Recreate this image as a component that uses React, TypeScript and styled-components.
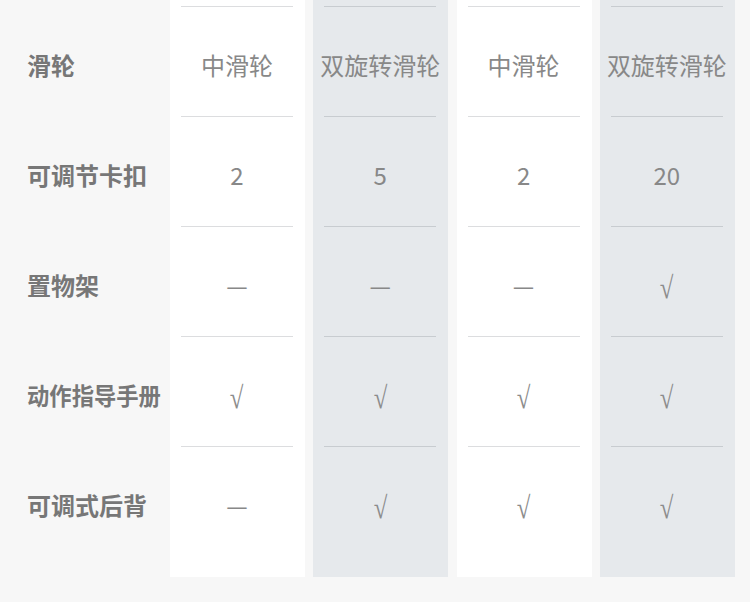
import React from "react";
import styled, { createGlobalStyle } from "styled-components";

const Global = createGlobalStyle`
  html, body { margin: 0; padding: 0; background: #f7f7f7; }
  body { font-family: "Noto Sans CJK SC", "Noto Sans", sans-serif; }
`;

const Page = styled.div`
  width: 750px;
  height: 602px;
  background: #f7f7f7;
  display: grid;
  grid-template-columns: 161.7px repeat(4, 135px);
  column-gap: 8.3px;
  align-items: start;
  overflow: hidden;
`;

const Column = styled.div<{ $tone: "label" | "white" | "gray" }>`
  display: flex;
  flex-direction: column;
  padding: 6px 0 21px;
  background: ${(p) => (p.$tone === "white" ? "#ffffff" : p.$tone === "gray" ? "#e6e9ec" : "transparent")};
`;

const Cell = styled.div<{ $tone: "label" | "white" | "gray" }>`
  box-sizing: border-box;
  height: 110px;
  padding-top: 6px;
  margin: ${(p) => (p.$tone === "label" ? "0" : "0 12px 0 11px")};
  border-top: 1px solid
    ${(p) => (p.$tone === "white" ? "#dcdddf" : p.$tone === "gray" ? "#c8ccd0" : "transparent")};
  display: flex;
  align-items: center;
  justify-content: ${(p) => (p.$tone === "label" ? "flex-start" : "center")};
  padding-left: ${(p) => (p.$tone === "label" ? "27px" : "0")};
`;

const Label = styled.span<{ $condensed?: boolean }>`
  font-size: 24px;
  font-weight: 700;
  color: #777777;
  line-height: 1;
  white-space: nowrap;
  display: inline-block;
  transform: ${(p) => (p.$condensed ? "scaleX(0.93)" : "none")};
  transform-origin: left center;
`;

const Value = styled.span<{ $check?: boolean }>`
  display: inline-block;
  font-size: ${(p) => (p.$check ? "31px" : "24px")};
  font-weight: 400;
  color: ${(p) => (p.$check ? "#8c8c8c" : "#888888")};
  line-height: 1;
  white-space: nowrap;
  font-family: ${(p) => (p.$check ? '"Liberation Serif", serif' : "inherit")};
  transform: ${(p) => (p.$check ? "translateY(3px) scaleX(0.8)" : "none")};
`;

const labels = ["滑轮", "可调节卡扣", "置物架", "动作指导手册", "可调式后背"];

const columns: { tone: "white" | "gray"; values: string[] }[] = [
  { tone: "white", values: ["中滑轮", "2", "—", "√", "—"] },
  { tone: "gray", values: ["双旋转滑轮", "5", "—", "√", "√"] },
  { tone: "white", values: ["中滑轮", "2", "—", "√", "√"] },
  { tone: "gray", values: ["双旋转滑轮", "20", "√", "√", "√"] },
];

export default function App() {
  return (
    <>
      <Global />
      <Page>
        <Column $tone="label">
          {labels.map((l) => (
            <Cell key={l} $tone="label">
              <Label $condensed={l.length > 5}>{l}</Label>
            </Cell>
          ))}
        </Column>
        {columns.map((c, i) => (
          <Column key={i} $tone={c.tone}>
            {c.values.map((v, j) => (
              <Cell key={j} $tone={c.tone}>
                <Value $check={v === "√"}>{v}</Value>
              </Cell>
            ))}
          </Column>
        ))}
      </Page>
    </>
  );
}
